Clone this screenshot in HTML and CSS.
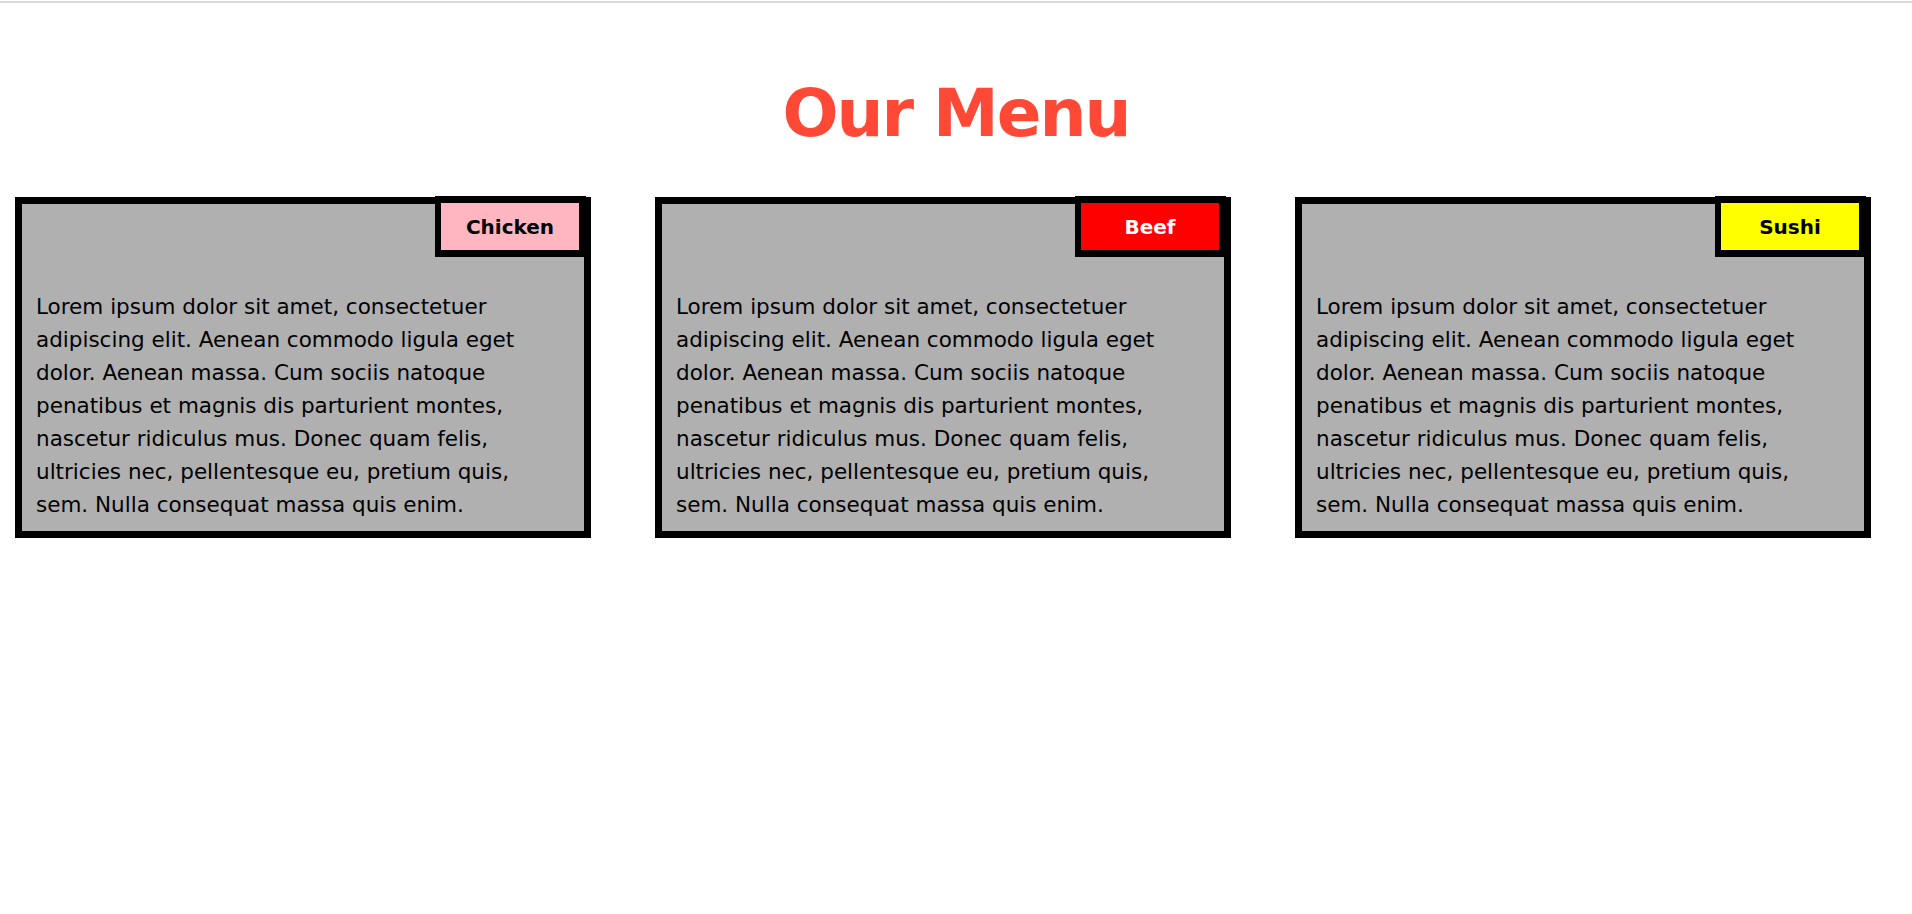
FILE: index.html
```html
<!DOCTYPE html>
<html lang="en">
<head>
<meta charset="utf-8">
<title>Our Menu</title>
<link rel="stylesheet" href="styles.css">
</head>
<body>
<div class="topline"></div>
<h1 class="title">Our Menu</h1>
<div class="menu">
  <div class="card">
    <div class="tag tag-chicken">Chicken</div>
    <p class="text">Lorem ipsum dolor sit amet, consectetuer adipiscing elit. Aenean commodo ligula eget dolor. Aenean massa. Cum sociis natoque penatibus et magnis dis parturient montes, nascetur ridiculus mus. Donec quam felis, ultricies nec, pellentesque eu, pretium quis, sem. Nulla consequat massa quis enim.</p>
  </div>
  <div class="card">
    <div class="tag tag-beef">Beef</div>
    <p class="text">Lorem ipsum dolor sit amet, consectetuer adipiscing elit. Aenean commodo ligula eget dolor. Aenean massa. Cum sociis natoque penatibus et magnis dis parturient montes, nascetur ridiculus mus. Donec quam felis, ultricies nec, pellentesque eu, pretium quis, sem. Nulla consequat massa quis enim.</p>
  </div>
  <div class="card">
    <div class="tag tag-sushi">Sushi</div>
    <p class="text">Lorem ipsum dolor sit amet, consectetuer adipiscing elit. Aenean commodo ligula eget dolor. Aenean massa. Cum sociis natoque penatibus et magnis dis parturient montes, nascetur ridiculus mus. Donec quam felis, ultricies nec, pellentesque eu, pretium quis, sem. Nulla consequat massa quis enim.</p>
  </div>
</div>
</body>
</html>
```
FILE: styles.css
```css
html, body {
  margin: 0;
  padding: 0;
  background: #ffffff;
}

body {
  font-family: "DejaVu Sans", "Liberation Sans", sans-serif;
  color: #000000;
}

.topline {
  margin-top: 1px;
  height: 2px;
  background: #d9d9d9;
}

.title {
  margin: 78px 0 50px;
  font-size: 66px;
  line-height: 66px;
  letter-spacing: -2px;
  font-weight: bold;
  text-align: center;
  color: #ff4836;
}

.menu {
  display: flex;
  gap: 64px;
  padding-left: 15px;
}

.card {
  position: relative;
  box-sizing: border-box;
  width: 576px;
  height: 341px;
  border: 7px solid #000000;
  background: #b0b0b0;
  padding: 86px 36px 0 14px;
}

.text {
  margin: 0;
  font-size: 21.5px;
  line-height: 33px;
}

.tag {
  position: absolute;
  top: -8px;
  right: -2px;
  box-sizing: border-box;
  width: 151px;
  height: 61px;
  padding-top: 2px;
  border-style: solid;
  border-color: #000000;
  border-width: 7px 7px 7px 6px;
  text-align: center;
  font-weight: bold;
  font-size: 20px;
  line-height: 45px;
}

.tag-chicken {
  background: #ffb6c1;
  color: #000000;
}

.tag-beef {
  background: #ff0000;
  color: #ffffff;
}

.tag-sushi {
  background: #ffff00;
  color: #000000;
}
```
